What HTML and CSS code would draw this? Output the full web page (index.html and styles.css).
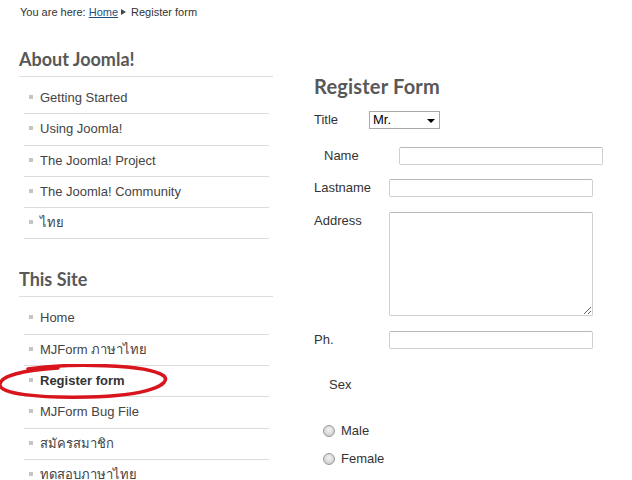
FILE: index.html
```html
<!DOCTYPE html>
<html lang="en">
<head>
<meta charset="utf-8">
<title>Register form</title>
<link rel="stylesheet" href="styles.css">
</head>
<body>
<div class="breadcrumb">You are here: <a href="#">Home</a><span class="crumb-arrow"></span>Register form</div>
<div class="layout">
  <aside class="sidebar">
    <section class="module">
      <h3 class="module-title">About Joomla!</h3>
      <ul class="menu">
        <li>Getting Started</li>
        <li>Using Joomla!</li>
        <li>The Joomla! Project</li>
        <li>The Joomla! Community</li>
        <li>ไทย</li>
      </ul>
    </section>
    <section class="module">
      <h3 class="module-title">This Site</h3>
      <ul class="menu">
        <li>Home</li>
        <li>MJForm ภาษาไทย</li>
        <li class="current">Register form
          <svg class="highlight" width="172" height="36" viewBox="0 0 172 36">
            <path d="M30 5 C 70 -1, 150 0, 166 12 C 174 20, 150 32, 90 33 C 40 34, 0 30, 2 20 C 3 12, 25 6, 60 4" fill="none" stroke="#d8141c" stroke-width="3.5" stroke-linecap="round"/>
          </svg>
        </li>
        <li>MJForm Bug File</li>
        <li>สมัครสมาชิก</li>
        <li>ทดสอบภาษาไทย</li>
      </ul>
    </section>
  </aside>
  <main class="content">
    <h2 class="page-title">Register Form</h2>
    <form class="reg-form">
      <div class="row row-title">
        <label class="label label-short">Title</label>
        <span class="select-wrap"><select class="select"><option>Mr.</option><option>Mrs.</option><option>Ms.</option></select></span>
      </div>
      <div class="row row-name">
        <label class="label">Name</label>
        <input class="field" type="text">
      </div>
      <div class="row row-lastname">
        <label class="label">Lastname</label>
        <input class="field" type="text">
      </div>
      <div class="row row-address">
        <label class="label">Address</label>
        <textarea class="area"></textarea>
      </div>
      <div class="row row-ph">
        <label class="label">Ph.</label>
        <input class="field" type="text">
      </div>
      <div class="row row-sex">
        <span class="label">Sex</span>
      </div>
      <div class="row row-radio row-male">
        <input class="radio" type="radio" name="sex" id="male"><label for="male">Male</label>
      </div>
      <div class="row row-radio row-female">
        <input class="radio" type="radio" name="sex" id="female"><label for="female">Female</label>
      </div>
    </form>
  </main>
</div>
</body>
</html>
```
FILE: styles.css
```css
html {
  overflow: hidden;
}
body {
  margin: 0;
  font-family: "Liberation Sans", Arial, sans-serif;
  color: #333;
  background: #fff;
}
.breadcrumb {
  padding: 5px 20px 0;
  font-size: 11px;
  line-height: 14px;
  color: #333;
}
.breadcrumb a {
  color: #1d4f80;
  text-decoration: underline;
}
.crumb-arrow {
  display: inline-block;
  width: 0;
  height: 0;
  border-left: 5px solid #444;
  border-top: 3px solid transparent;
  border-bottom: 3px solid transparent;
  margin: 0 5px 0 3px;
  vertical-align: 1px;
}
.layout {
  display: flex;
  align-items: flex-start;
}
.sidebar {
  width: 254px;
  margin-left: 19px;
  flex: none;
}
.module-title {
  margin: 28px 0 0;
  padding-bottom: 5px;
  border-bottom: 1px solid #ddd;
  font-family: Lato, "Open Sans", sans-serif;
  font-weight: 700;
  font-size: 18px;
  line-height: 24px;
  color: #585858;
}
.menu {
  list-style: none;
  margin: 6px 4px 0 5px;
  padding: 0;
}
.menu li {
  position: relative;
  padding: 7px 0 7.3px 5px;
  line-height: 16px;
  font-size: 13px;
  color: #444;
  border-bottom: 1px solid #dcdcdc;
}
.menu li::before {
  content: "";
  display: inline-block;
  width: 4px;
  height: 4px;
  background: #c4c4c4;
  margin-right: 7px;
  vertical-align: 3px;
}
.menu li.current {
  font-weight: 700;
  color: #333;
}
.highlight {
  position: absolute;
  left: -26px;
  top: -2px;
  pointer-events: none;
}
.content {
  margin-left: 41px;
  flex: 1;
}
.page-title {
  margin: 55px 0 0;
  font-family: Lato, "Open Sans", sans-serif;
  font-weight: 700;
  font-size: 20px;
  line-height: 24px;
  letter-spacing: 0.2px;
  color: #585858;
}
.reg-form {
  margin: 0;
  font-size: 13px;
  color: #333;
}
.row {
  display: flex;
  align-items: center;
  height: 18px;
  line-height: 16px;
}
.label {
  width: 75px;
  flex: none;
}
.label-short {
  width: 55px;
}
.row-title {
  margin-top: 13px;
}
.row-name {
  margin-top: 18px;
  padding-left: 10px;
}
.row-lastname {
  margin-top: 14px;
}
.row-address {
  margin-top: 15px;
  height: auto;
  align-items: flex-start;
}
.row-address .label {
  padding-top: 1px;
}
.row-ph {
  margin-top: 15px;
}
.row-sex {
  margin-top: 27px;
  padding-left: 15px;
}
.row-radio {
  padding-left: 9px;
}
.row-male {
  margin-top: 28px;
}
.row-female {
  margin-top: 10px;
}
.select-wrap {
  position: relative;
  display: inline-block;
}
.select-wrap::after {
  content: "";
  position: absolute;
  right: 5px;
  top: 8px;
  border-top: 4px solid #000;
  border-left: 4px solid transparent;
  border-right: 4px solid transparent;
  pointer-events: none;
}
.select {
  appearance: none;
  -webkit-appearance: none;
  display: block;
  width: 71px;
  height: 18px;
  box-sizing: border-box;
  margin: 0;
  padding: 0 0 0 3px;
  border: 1px solid #a9a9a9;
  border-radius: 0;
  background: #fff;
  font-family: "Liberation Sans", Arial, sans-serif;
  font-size: 13px;
  line-height: 16px;
  color: #000;
}
.field {
  width: 204px;
  height: 18px;
  box-sizing: border-box;
  margin: 0;
  padding: 0 3px;
  border: 1px solid #cfcfcf;
  border-top-color: #b8b8b8;
  border-radius: 2px;
  background: #fff;
  font-size: 13px;
}
.area {
  width: 204px;
  height: 104px;
  box-sizing: border-box;
  margin: 0;
  padding: 2px;
  border: 1px solid #cfcfcf;
  border-top-color: #b8b8b8;
  border-radius: 2px;
  background: #fff;
  font-size: 13px;
}
.radio {
  appearance: none;
  -webkit-appearance: none;
  width: 12px;
  height: 12px;
  margin: 0 6px 0 0;
  border: 1px solid #9a9a9a;
  border-radius: 50%;
  background: radial-gradient(circle at 50% 40%, #f4f4f4 0%, #d6d6d6 60%, #bdbdbd 100%);
  box-sizing: border-box;
  flex: none;
}
```
